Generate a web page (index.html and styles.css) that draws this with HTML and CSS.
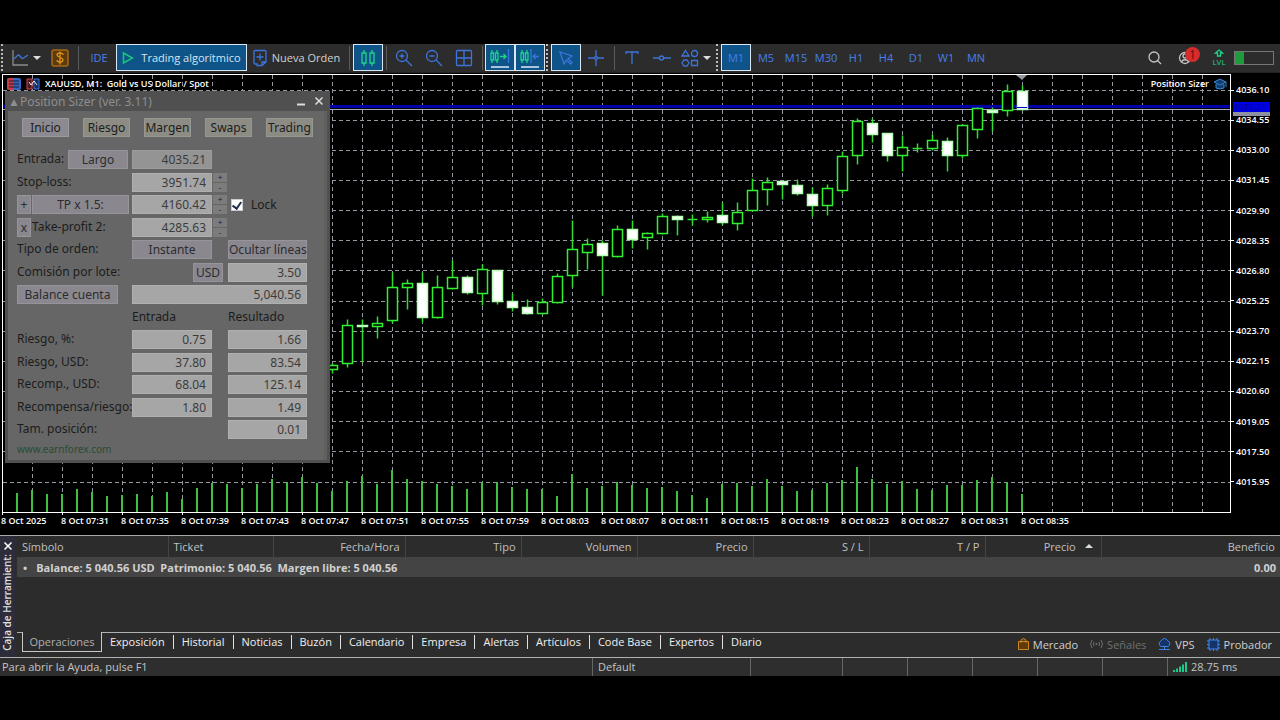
FILE: index.html
```html
<!DOCTYPE html>
<html lang="es">
<head>
    <meta charset="UTF-8">
    <meta name="viewport" content="width=device-width, initial-scale=1.0">
    <title>XAUUSD, M1: Gold vs US Dollar / Spot</title>
    <link rel="stylesheet" href="styles.css">
</head>
<body>
    <div class="app">
        <!-- toolbar start -->
        <header class="toolbar">
            <span class="grip"></span>
            <button class="tool tool-menu" aria-label="Tipo de gráfico">
                <svg width="18" height="18" viewBox="0 0 18 18"><path class="s-grey" d="M2 1v15h15"/><path class="s-blue" d="M3 10l3.500-3.500q1-1 2 0l2 2.500q1 1 2 0L17 6"/></svg>
                <span class="caret"></span>
            </button>
            <button class="tool tool-dollar" aria-label="Símbolos">
                <svg width="18" height="18" viewBox="0 0 18 18"><rect x="1" y="1" width="16" height="16" rx="2" fill="#5c3a0c" stroke="#a86a14" stroke-width="1.500"/><path d="M12 6c0-3-6-2.500-6 0s6 2 6 5-6 2.500-6 0M9 2.500v13" fill="none" stroke="#e0941c" stroke-width="1.300"/></svg>
            </button>
            <span class="sep"></span>
            <button class="tool tool-ide">IDE</button>
            <button class="tool tool-algo active">
                <svg width="12" height="14" viewBox="0 0 12 14"><path d="M1.500 2l9 5-9 5z" fill="none" stroke="#16c878" stroke-width="1.500"/></svg>
                Trading algorítmico
            </button>
            <button class="tool tool-order">
                <svg width="14" height="18" viewBox="0 0 14 18"><path class="s-blue" d="M2 1.500h10a1 1 0 0 1 1 1V13l-4 3.500H4V15H2a1 1 0 0 1-1-1V2.500a1 1 0 0 1 1-1zM7 4.500v7M3.500 8h7M9 16v-3h4"/></svg>
                Nueva Orden
            </button>
            <span class="sep"></span>
            <button class="tool icon active" aria-label="Velas">
                <svg width="20" height="20" viewBox="0 0 20 20"><path class="s-green" d="M4 5h4v10H4zM12 5h4v10h-4zM6 2v3M6 15v3M14 2v3M14 15v3"/></svg>
            </button>
            <span class="sep sep-tight"></span>
            <button class="tool icon" aria-label="Acercar">
                <svg width="18" height="18" viewBox="0 0 18 18"><circle class="s-blue" cx="7" cy="7" r="5.500"/><path class="s-blue" d="M11 11l6 6M4.500 7h5M7 4.500v5"/></svg>
            </button>
            <button class="tool icon" aria-label="Alejar">
                <svg width="18" height="18" viewBox="0 0 18 18"><circle class="s-blue" cx="7" cy="7" r="5.500"/><path class="s-blue" d="M11 11l6 6M4.500 7h5"/></svg>
            </button>
            <button class="tool icon" aria-label="Mosaico">
                <svg width="18" height="18" viewBox="0 0 18 18"><path class="s-blue" d="M2.500 1.500h13a1 1 0 0 1 1 1v13a1 1 0 0 1-1 1h-13a1 1 0 0 1-1-1v-13a1 1 0 0 1 1-1zM9 1.500v15M1.500 9h15"/></svg>
            </button>
            <span class="sep sep-tight"></span>
            <button class="tool icon active" aria-label="Desplazamiento automático">
                <svg width="20" height="22" viewBox="0 0 20 22"><path class="s-green" d="M1 6h2.500v7H1zM5.500 6H8v7H5.500zM2 3v3M2 13v3M7 3v3M7 13v3M10 9.500h6M13.500 7l2.500 2.500-2.500 2.500"/><path d="M18.500 2v14" class="s-blue"/><path d="M1 20h18" stroke="#a9c4dc" stroke-width="2"/></svg>
            </button>
            <button class="tool icon active" aria-label="Margen del gráfico">
                <svg width="20" height="22" viewBox="0 0 20 22"><path class="s-green" d="M1 6h2.500v7H1zM5.500 6H8v7H5.500zM2 3v3M2 13v3M7 3v3M7 13v3"/><path d="M11 2v14M13 9.500h6M15.500 7L13 9.500l2.500 2.500" class="s-blue"/><path d="M1 20h18" stroke="#a9c4dc" stroke-width="2"/></svg>
            </button>
            <span class="grip"></span>
            <button class="tool icon active" aria-label="Cursor">
                <svg width="18" height="18" viewBox="0 0 18 18"><path class="s-blue" d="M3 3l12 4-4 2.500 4 4-1.500 1.500-4-4L7 15z"/></svg>
            </button>
            <button class="tool icon" aria-label="Retículo">
                <svg width="18" height="18" viewBox="0 0 18 18"><path class="s-blue" d="M9 1v6M9 11v6M1 9h6M11 9h6"/><circle class="s-blue" cx="9" cy="9" r="1.500"/></svg>
            </button>
            <span class="sep sep-tight"></span>
            <button class="tool icon" aria-label="Texto">
                <svg width="18" height="18" viewBox="0 0 18 18"><path class="s-blue" d="M3 5V3h12v2M9 3v12"/></svg>
            </button>
            <button class="tool icon" aria-label="Línea horizontal">
                <svg width="20" height="18" viewBox="0 0 20 18"><path class="s-blue" d="M1 9h6M12 9h7"/><circle class="s-blue" cx="9.500" cy="9" r="2"/></svg>
            </button>
            <button class="tool tool-shapes" aria-label="Objetos">
                <svg width="18" height="18" viewBox="0 0 18 18"><path class="s-blue" d="M4.500 1.500L8 7H1zM10.500 11.500h6v5h-6z"/><circle class="s-blue" cx="13.500" cy="4.500" r="3"/><path class="s-blue" d="M3 11h3l2 3-2 3H3l-2-3z"/></svg>
                <span class="caret"></span>
            </button>
            <span class="grip"></span>
            <nav class="periods">
                <button class="tool icon active">M1</button>
                <button class="tool icon">M5</button>
                <button class="tool icon">M15</button>
                <button class="tool icon">M30</button>
                <button class="tool icon">H1</button>
                <button class="tool icon">H4</button>
                <button class="tool icon">D1</button>
                <button class="tool icon">W1</button>
                <button class="tool icon">MN</button>
            </nav>
            <div class="toolbar-right">
                <button class="tool icon" aria-label="Buscar">
                    <svg width="16" height="16" viewBox="0 0 16 16"><circle class="s-light" cx="7" cy="7" r="5"/><path class="s-light" d="M10.500 10.500L14 14"/></svg>
                </button>
                <button class="tool icon account" aria-label="Cuenta">
                    <svg width="16" height="16" viewBox="0 0 16 16"><circle class="s-light" cx="8" cy="8" r="5.500"/><circle class="s-light" cx="8" cy="6" r="2"/><path class="s-light" d="M4.500 12c1-3 6-3 7 0"/></svg>
                    <span class="badge">1</span>
                </button>
                <span class="level">
                    <svg width="10" height="9" viewBox="0 0 10 9"><path class="s-green" d="M5 1l3.500 3H6.500v3h-3V4h-2z"/></svg>
                    LVL
                </span>
                <span class="battery"><span class="battery-fill"></span></span>
            </div>
        </header>
        <!-- toolbar end -->

        <!-- chart start -->
        <main class="chart">
            <div class="chart-row">
                <div class="plot">
                    <svg class="plot-svg" id="plot"></svg>
                </div>
                <div class="price-axis" id="prices"></div>
            </div>
            <div class="time-axis" id="times"></div>

            <div class="chart-title">
                <svg width="14" height="12" viewBox="0 0 14 12"><rect width="14" height="12" rx="2" fill="#3468c4"/><path d="M0 2a2 2 0 0 1 2-2h5v12H2a2 2 0 0 1-2-2z" fill="#c83c48"/><path d="M2 3h10M2 6h10M2 9h10" stroke="#141c34"/></svg>
                <svg width="14" height="12" viewBox="0 0 14 12"><path d="M1 1h5v10H1z" fill="#4c1820" stroke="#d84450"/><path d="M8 1h5v10H8z" fill="#142c5c" stroke="#3c78dc"/><path d="M3 4l2 3 3-4 3 4" fill="none" stroke="#f0e4e8"/></svg>
                XAUUSD, M1:&nbsp; Gold vs US Dollar / Spot
            </div>
            <div class="expert">
                Position Sizer
                <svg width="14" height="12" viewBox="0 0 14 12"><path d="M7 1l6 3-6 3-6-3zM3 6v4q4 2 8 0V6M13 4v5" fill="#123c6c" stroke="#3488d8"/></svg>
            </div>
            <div class="last-price">4035.21</div>

            <!-- position sizer start -->
            <section class="sizer">
                <div class="sizer-title">
                    <span class="sizer-name">▲Position Sizer (ver. 3.11)</span>
                    <button class="sizer-ctl" aria-label="Minimizar"><svg width="10" height="10" viewBox="0 0 10 10"><path d="M1 8.500h8" stroke="#ddd" stroke-width="2"/></svg></button>
                    <button class="sizer-ctl" aria-label="Cerrar"><svg width="10" height="10" viewBox="0 0 10 10"><path d="M1.500 1.500l7 7M8.500 1.500l-7 7" stroke="#ddd" stroke-width="1.500"/></svg></button>
                </div>
                <div class="sizer-body">
                    <div class="sizer-tabs">
                        <button class="current">Inicio</button>
                        <button>Riesgo</button>
                        <button>Margen</button>
                        <button>Swaps</button>
                        <button>Trading</button>
                    </div>
                    <div class="sizer-rows">
                        <div class="line">
                            <div class="name name-split"><label for="entry">Entrada:</label><button class="btn w-side">Largo</button></div>
                            <input class="off" id="entry" value="4035.21">
                        </div>
                        <div class="line">
                            <div class="name"><label for="sl">Stop-loss:</label></div>
                            <input id="sl" value="3951.74">
                            <div class="spin"><button>+</button><button>-</button></div>
                        </div>
                        <div class="line">
                            <div class="name"><button class="btn w-mini">+</button><button class="btn w-tp">TP x 1.5:</button></div>
                            <input aria-label="Take-profit 1" value="4160.42">
                            <div class="spin"><button>+</button><button>-</button></div>
                            <div class="lock"><input type="checkbox" id="lock" checked><label for="lock">Lock</label></div>
                        </div>
                        <div class="line">
                            <div class="name"><button class="btn w-mini">x</button><label for="tp2">Take-profit 2:</label></div>
                            <input id="tp2" value="4285.63">
                            <div class="spin"><button>+</button><button>-</button></div>
                        </div>
                        <div class="line">
                            <div class="name">Tipo de orden:</div>
                            <button class="btn">Instante</button>
                            <button class="btn col-result">Ocultar líneas</button>
                        </div>
                        <div class="line">
                            <div class="name"><label for="fee">Comisión por lote:</label></div>
                            <button class="btn w-usd">USD</button>
                            <input class="col-result" id="fee" value="3.50">
                        </div>
                        <div class="line">
                            <div class="name"><button class="btn w-balance">Balance cuenta</button></div>
                            <input class="wide" aria-label="Balance cuenta" value="5,040.56">
                        </div>
                        <div class="line">
                            <div class="name"></div>
                            <div>Entrada</div>
                            <div class="col-result">Resultado</div>
                        </div>
                        <div class="line">
                            <div class="name"><label for="risk">Riesgo, %:</label></div>
                            <input id="risk" value="0.75">
                            <input class="col-result" aria-label="Riesgo, % resultado" value="1.66">
                        </div>
                        <div class="line">
                            <div class="name"><label for="risk-usd">Riesgo, USD:</label></div>
                            <input id="risk-usd" value="37.80">
                            <input class="col-result" aria-label="Riesgo, USD resultado" value="83.54">
                        </div>
                        <div class="line">
                            <div class="name"><label for="reward">Recomp., USD:</label></div>
                            <input id="reward" value="68.04">
                            <input class="col-result" aria-label="Recomp., USD resultado" value="125.14">
                        </div>
                        <div class="line">
                            <div class="name"><label for="ratio">Recompensa/riesgo:</label></div>
                            <input id="ratio" value="1.80">
                            <input class="col-result" aria-label="Recompensa/riesgo resultado" value="1.49">
                        </div>
                        <div class="line">
                            <div class="name"><label for="size">Tam. posición:</label></div>
                            <input class="col-result" id="size" value="0.01">
                        </div>
                    </div>
                    <a class="sizer-link" href="#">www.earnforex.com</a>
                </div>
            </section>
            <!-- position sizer end -->
        </main>
        <!-- chart end -->

        <!-- toolbox start -->
        <section class="toolbox">
            <aside class="toolbox-side">
                <button aria-label="Cerrar"><svg width="10" height="10" viewBox="0 0 10 10"><path d="M1.500 1.500l7 7M8.500 1.500l-7 7" stroke="#fff" stroke-width="1.500"/></svg></button>
                <span>Caja de Herramient:</span>
            </aside>
            <div class="toolbox-main">
                <table>
                    <colgroup>
                        <col class="c-symbol"><col class="c-ticket"><col class="c-date"><col class="c-num"><col class="c-num"><col class="c-num"><col class="c-num"><col class="c-num"><col class="c-num"><col>
                    </colgroup>
                    <thead>
                        <tr>
                            <th class="left">Símbolo</th>
                            <th class="left">Ticket</th>
                            <th>Fecha/Hora</th>
                            <th>Tipo</th>
                            <th>Volumen</th>
                            <th>Precio</th>
                            <th>S / L</th>
                            <th>T / P</th>
                            <th>Precio <span class="sort"></span></th>
                            <th>Beneficio</th>
                        </tr>
                    </thead>
                    <tbody>
                        <tr>
                            <td class="left" colspan="9"><span class="dot">•</span>Balance: 5 040.56 USD&nbsp; Patrimonio: 5 040.56&nbsp; Margen libre: 5 040.56</td>
                            <td>0.00</td>
                        </tr>
                    </tbody>
                </table>
                <div class="tabs">
                    <div class="tabs-edge"></div>
                    <button class="current">Operaciones</button>
                    <div class="tabs-rest">
                        <button>Exposición</button>
                        <button>Historial</button>
                        <button>Noticias</button>
                        <button>Buzón</button>
                        <button>Calendario</button>
                        <button>Empresa</button>
                        <button>Alertas</button>
                        <button>Artículos</button>
                        <button>Code Base</button>
                        <button>Expertos</button>
                        <button>Diario</button>
                        <div class="services">
                            <a href="#"><svg width="13" height="14" viewBox="0 0 13 14"><path d="M1.500 4.500h10v8h-10zM4 6V3q2.500-3 5 0v3" fill="#5c3a0c" stroke="#d0841c"/></svg>Mercado</a>
                            <a class="muted" href="#"><svg width="15" height="12" viewBox="0 0 15 12"><path d="M3 2q-3 4 0 8M5 4q-1 2 0 4M12 2q3 4 0 8M10 4q1 2 0 4" fill="none" stroke="#707070"/><circle cx="7.500" cy="6" r="1" fill="#707070"/></svg>Señales</a>
                            <a href="#"><svg width="15" height="14" viewBox="0 0 15 14"><path d="M4 9.500a3 3 0 0 1 0-5.500q3.500-5 7 0a3 3 0 0 1 0 5.500zM7.500 10v2.500M2 12.500h11" fill="#143468" stroke="#3c84f4"/></svg>VPS</a>
                            <a href="#"><svg width="15" height="15" viewBox="0 0 15 15"><path d="M4 1v13M7.500 1v13M11 1v13M1 4h13M1 7.500h13M1 11h13" stroke="#3c84f4"/><rect x="3" y="3" width="9" height="9" fill="#143468" stroke="#3c84f4"/></svg>Probador</a>
                        </div>
                    </div>
                </div>
            </div>
        </section>
        <!-- toolbox end -->

        <footer class="status">
            <span class="status-help">Para abrir la Ayuda, pulse F1</span>
            <span class="s-profile">Default</span>
            <span class="s-wide"></span>
            <span></span>
            <span></span>
            <span></span>
            <span></span>
            <span></span>
            <span class="s-ping"><svg width="15" height="10" viewBox="0 0 15 10"><path d="M1 10V8M4 10V6.500M7 10V4.500M10 10V2.500M13 10V0" stroke="#1ec88a" stroke-width="2"/></svg>28.75 ms</span>
        </footer>
    </div>
    <script src="chart.js"></script>
</body>
</html>
```
FILE: styles.css
```css
* {
    box-sizing: border-box;
}

body {
    margin: 0;
    background-color: #000;
    font-family: "Open Sans", "Noto Sans", sans-serif;
    font-size: 11px;
    color: #d0d0d0;
}

button, input {
    font: inherit;
    color: inherit;
    margin: 0;
    padding: 0;
    border: 0;
    background: none;
    border-radius: 0;
}

a {
    color: inherit;
    text-decoration: none;
}

svg {
    display: block;
    flex: none;
}

.app {
    display: flex;
    flex-direction: column;
    padding: 44px 0;
}

/* icon strokes */

.s-blue, .s-green, .s-grey, .s-light {
    fill: none;
    stroke-width: 1.3;
}

.s-blue {
    stroke: #3c74dc;
}

.s-green {
    stroke: #1ed488;
}

.s-grey {
    stroke: #8a8a8a;
}

.s-light {
    stroke: #c4c4c4;
}

/* toolbar */

.toolbar {
    display: flex;
    align-items: flex-start;
    height: 28px;
    background-color: #2c2c2c;
}

.tool {
    display: flex;
    align-items: center;
    justify-content: center;
    flex: none;
    height: 27px;
    white-space: nowrap;
    color: #4480ec;
}

.tool.active {
    background-color: #0f5489;
    border: 1px solid #dce6f0;
}

.icon {
    width: 30px;
}

.grip {
    flex: none;
    width: 3px;
    height: 27px;
    margin: 0 2px 0 1px;
    border-left: 2px dotted #bbb;
}

.sep {
    flex: none;
    width: 1px;
    height: 24px;
    margin: 2px 3px 0;
    background-color: #5c5c5c;
}

.sep-tight {
    margin: 2px 2px 0 3px;
}

.caret {
    border: 4px solid transparent;
    border-top-color: #ddd;
    border-bottom: 0;
    margin-left: 4px;
}

.tool-menu {
    width: 38px;
    margin-left: 1px;
}

.tool-dollar {
    width: 30px;
}

.tool-ide {
    width: 34px;
}

.tool-algo {
    width: 131px;
    gap: 7px;
    color: #d4e4f0;
}

.tool-order {
    width: 99px;
    gap: 5px;
    color: #d0d0d0;
}

.tool-shapes {
    width: 38px;
}

.periods {
    display: flex;
}

.toolbar-right {
    display: flex;
    align-items: center;
    margin-left: auto;
    padding-right: 6px;
}

.account {
    position: relative;
}

.badge {
    position: absolute;
    top: 3px;
    right: 0;
    width: 15px;
    height: 15px;
    border-radius: 50%;
    background-color: #d82c2c;
    color: #541010;
    line-height: 15px;
    font-size: 12px;
}

.level {
    display: flex;
    flex-direction: column;
    align-items: center;
    width: 20px;
    margin: 0 5px 0 9px;
    font-size: 8px;
    line-height: 8px;
    color: #1ed488;
}

.battery {
    width: 40px;
    height: 14px;
    border: 1px solid #777;
}

.battery-fill {
    display: block;
    width: 9px;
    height: 12px;
    background-color: #1e9c3c;
}

/* chart */

.chart {
    position: relative;
    padding-top: 1px;
    background-color: #000;
    border-top: 1px solid #222;
    font-size: 9px;
    font-weight: 600;
    color: #fff;
}

.chart-row {
    display: flex;
}

.plot {
    flex: 1;
    min-width: 0;
    margin-left: 2px;
    border: 1px solid #fff;
}

.plot-svg {
    width: 100%;
    height: 437px;
}

.grid-line {
    stroke: #9498a0;
    stroke-dasharray: 4 3;
}

.candle {
    fill: #000;
    stroke: #30f030;
    stroke-width: 1.5;
}

.candle.down {
    fill: #fff;
    stroke: #b4ffb4;
}

.wick {
    stroke: #30dc30;
    stroke-width: 1.5;
}

.volume {
    stroke: #40c040;
    stroke-width: 2;
}

.price-axis {
    display: flex;
    flex-direction: column;
    justify-content: space-between;
    width: 49px;
    height: 404px;
    margin-top: 10px;
    line-height: 12px;
}

.price-axis span {
    display: flex;
    align-items: center;
    gap: 2px;
}

.price-axis span::before {
    content: "";
    width: 3px;
    height: 1px;
    background-color: #fff;
}

.time-axis {
    display: flex;
    overflow: hidden;
    height: 22px;
    padding-left: 1px;
    line-height: 12px;
}

.time-axis span {
    flex: none;
    width: 60px;
}

.time-axis span::before {
    content: "";
    display: block;
    width: 1px;
    height: 2px;
    margin-left: 1px;
    background-color: #fff;
}

.chart-title {
    position: absolute;
    top: 4px;
    left: 7px;
    display: flex;
    align-items: center;
    gap: 5px;
    line-height: 14px;
}

.expert {
    position: absolute;
    top: 4px;
    right: 53px;
    display: flex;
    align-items: center;
    gap: 4px;
    line-height: 14px;
}

.last-price {
    position: absolute;
    top: 29px;
    right: 10px;
    width: 37px;
    height: 14px;
    border-bottom: 4px solid #8c90a0;
    background-color: #0000e8;
    color: #0000a0;
    line-height: 10px;
}

/* position sizer */

.sizer {
    position: absolute;
    top: 18px;
    left: 5px;
    width: 325px;
    padding: 0 3px 3px;
    background-color: #505050;
    font-family: "Noto Sans", "Open Sans", sans-serif;
    font-size: 12px;
    font-weight: 400;
    color: #1c1c1c;
}

.sizer-title {
    display: flex;
    align-items: center;
    height: 20px;
    color: #8e8e8e;
}

.sizer-name {
    flex: 1;
}

.sizer-ctl {
    width: 18px;
    padding-left: 5px;
}

.sizer-body {
    padding: 7px 15px 3px 9px;
    background-color: #666;
    border-right: 3px solid #606060;
}

.sizer-tabs {
    display: flex;
    justify-content: space-between;
    padding-left: 5px;
    margin: 0 -4px 13px 0;
}

.sizer-tabs button {
    width: 47px;
    height: 19px;
    background-color: #8c8c84;
    border: 1px solid #989890;
}

.sizer-tabs .current {
    background-color: #8c8a90;
    border-color: #9c9aa0;
}

.sizer-rows {
    display: flex;
    flex-direction: column;
    justify-content: space-between;
    height: 289px;
}

.line {
    display: grid;
    grid-template-columns: 114px 80px 14px 79px;
    column-gap: 1px;
    height: 19px;
    line-height: 17px;
}

.line > * {
    min-width: 0;
}

.name {
    display: flex;
    gap: 1px;
    white-space: nowrap;
}

.name-split {
    justify-content: space-between;
    padding-right: 3px;
}

.line > .col-result {
    grid-column: 4;
}

.line > .wide {
    grid-column: 2 / 5;
}

.line input {
    width: 100%;
    height: 19px;
    padding-right: 5px;
    background-color: #a6a6a6;
    border: 1px solid #b0b0b0;
    text-align: right;
    color: #3c3c3c;
}

.line .off {
    background-color: #949494;
    border-color: #9c9c9c;
}

.btn {
    height: 19px;
    background-color: #8a888e;
    border: 1px solid #96949a;
    color: #2c2c30;
    white-space: nowrap;
}

.w-side {
    width: 60px;
}

.w-mini {
    width: 14px;
}

.w-tp {
    width: 97px;
}

.w-usd {
    width: 30px;
    justify-self: end;
    grid-column: 2 / 4;
    margin-right: 4px;
}

.w-balance {
    width: 101px;
}

.spin {
    display: flex;
    flex-direction: column;
    gap: 1px;
}

.spin button {
    height: 9px;
    background-color: #7c7c7c;
    font-family: "Liberation Sans", sans-serif;
    line-height: 9px;
    font-size: 8px;
}

.line .lock {
    display: flex;
    align-items: center;
    gap: 8px;
    padding-left: 3px;
}

.line .lock input {
    appearance: none;
    width: 12px;
    height: 12px;
    padding: 0;
    background: #fff;
    border: 1px solid #ccc;
}

.lock input:checked::before {
    content: "";
    display: block;
    width: 4px;
    height: 7px;
    margin: 0 auto;
    border: solid #20304c;
    border-width: 0 2px 2px 0;
    transform: rotate(35deg);
}

.sizer-link {
    display: block;
    margin-top: 3px;
    line-height: 15px;
    font-size: 10px;
    color: #284c34;
}

/* toolbox */

.toolbox {
    display: flex;
    height: 122px;
    border-top: 1px solid #a8a8a8;
    background-color: #2c2c2c;
}

.toolbox-side {
    display: flex;
    flex-direction: column;
    align-items: center;
    justify-content: space-between;
    width: 15px;
    padding: 5px 0 6px;
    background-color: #2c2c3a;
    color: #e0e0e0;
}

.toolbox-side span {
    writing-mode: vertical-rl;
    transform: rotate(180deg);
    line-height: 15px;
    font-size: 10px;
    font-weight: 600;
    white-space: nowrap;
}

.toolbox-main {
    flex: 1;
    display: flex;
    flex-direction: column;
    min-width: 0;
    padding-left: 2px;
}

table {
    width: 100%;
    table-layout: fixed;
    border-collapse: collapse;
}

th {
    height: 21px;
    padding: 0 5px;
    border-right: 1px solid #444;
    text-align: right;
    font-weight: 400;
    color: #c0c0c0;
}

th:last-child {
    border-right: 0;
}

td {
    height: 20px;
    padding: 0 4px 0 6px;
    background-color: #444;
    text-align: right;
    font-weight: 700;
}

.left {
    text-align: left;
}

.dot {
    margin-right: 9px;
}

.c-symbol {
    width: 151px;
}

.c-ticket {
    width: 105px;
}

.c-date {
    width: 132px;
}

.c-num {
    width: 116px;
}

.sort {
    display: inline-block;
    margin: 0 3px 3px 6px;
    border: 4px solid transparent;
    border-bottom-color: #ddd;
    border-top: 0;
}

.tabs {
    display: flex;
    margin-top: auto;
    height: 25px;
}

.tabs-edge {
    width: 5px;
    border-top: 1px solid #b0b0b0;
}

.tabs > .current {
    width: 80px;
    height: 20px;
    border: 1px solid #c8c8c8;
    border-top: 0;
    color: #b0b0b0;
}

.tabs-rest {
    display: flex;
    flex: 1;
    border-top: 1px solid #b0b0b0;
}

.tabs-rest button {
    height: 14px;
    margin-top: 2px;
    padding: 0 8px;
    border-right: 1px solid #e0e0e0;
    line-height: 14px;
    font-weight: 500;
    color: #f0f0f0;
}

.tabs-rest button:last-of-type {
    border-right: 0;
}

.services {
    display: flex;
    align-items: center;
    gap: 11px;
    margin-left: auto;
    padding: 0 8px 2px 0;
}

.services a {
    display: flex;
    align-items: center;
    gap: 3px;
}

.services .muted {
    color: #707070;
}

/* status bar */

.status {
    display: flex;
    height: 19px;
    border-top: 1px solid #b0b0b0;
    background-color: #2e2e2e;
    line-height: 18px;
    color: #c4c4c4;
}

.status span {
    width: 65px;
    padding-left: 5px;
    border-left: 1px solid #666;
}

.status .status-help {
    flex: 1;
    padding-left: 2px;
    border-left: 0;
}

.status .s-profile {
    width: 158px;
}

.status .s-wide {
    width: 92px;
}

.status .s-ping {
    display: flex;
    align-items: center;
    gap: 3px;
    width: 113px;
}
```
FILE: chart.js
```js
const svgNs = 'http://www.w3.org/2000/svg';
const plot = document.getElementById('plot');

// rows are counted from the top of the window, the plot starts here
const top0 = 75;
const left0 = 3;
const bottom = 512;
const step = 15;

// high, body top, body bottom, low, down
const candles = [
    [363, 365, 370, 373, 0], [319, 325, 364, 367, 0], [319, 325, 327, 362, 1], [316, 323, 327, 338, 0],
    [272, 287, 321, 323, 0], [279, 283, 288, 309, 0], [272, 283, 318, 322, 1], [275, 287, 318, 318, 0],
    [260, 277, 289, 289, 0], [275, 277, 293, 294, 1], [264, 269, 294, 305, 0], [270, 270, 302, 304, 1],
    [293, 301, 308, 311, 1], [299, 307, 314, 314, 1], [298, 302, 314, 314, 0], [273, 276, 303, 303, 0],
    [220, 249, 276, 287, 0], [238, 244, 253, 269, 0], [240, 243, 256, 295, 1], [225, 229, 257, 257, 0],
    [220, 229, 240, 248, 1], [232, 233, 238, 249, 0], [213, 216, 234, 234, 0], [215, 216, 220, 235, 1],
    [214, 219, 219, 225, 0], [211, 217, 220, 222, 0], [202, 215, 223, 225, 1], [202, 212, 224, 230, 0],
    [178, 190, 211, 211, 0], [177, 182, 190, 205, 0], [181, 181, 185, 199, 1], [179, 185, 194, 195, 1],
    [187, 194, 206, 216, 1], [184, 188, 206, 215, 0], [151, 156, 191, 193, 0], [118, 121, 156, 164, 0],
    [118, 123, 135, 142, 1], [133, 133, 156, 161, 1], [135, 147, 156, 171, 0], [143, 148, 148, 152, 0],
    [134, 140, 149, 150, 0], [137, 141, 156, 171, 1], [124, 125, 156, 158, 0], [107, 108, 130, 138, 0],
    [107, 110, 113, 131, 1], [84, 91, 111, 116, 0], [85, 91, 110, 110, 1]
];

const volumes = [
    493, 490, 494, 494, 489, 492, 496, 495, 494, 496, 492, 499, 488, 483, 484, 488, 484,
    479, 482, 477, 483, 491, 481, 476, 484, 470, 479, 481, 484, 486, 489, 482, 482, 487,
    489, 489, 496, 474, 488, 486, 482, 485, 488, 487, 491, 495, 498, 484, 483, 486, 479,
    486, 491, 490, 483, 480, 467, 479, 484, 481, 489, 490, 485, 485, 480, 477, 482, 494
];

const prices = ['4036.10', '4034.55', '4033.00', '4031.45', '4029.90', '4028.35', '4026.80',
    '4025.25', '4023.70', '4022.15', '4020.60', '4019.05', '4017.50', '4015.95'];

const times = ['2025', '07:31', '07:35', '07:39', '07:43', '07:47', '07:51', '07:55', '07:59',
    '08:03', '08:07', '08:11', '08:15', '08:19', '08:23', '08:27', '08:31', '08:35'];

function add(name, attrs) {
    const el = document.createElementNS(svgNs, name);
    for (const key in attrs) el.setAttribute(key, attrs[key]);
    plot.appendChild(el);
}

function px(x) {
    return x - left0 + 0.5;
}

function py(y) {
    return y - top0 + 0.5;
}

function draw() {
    const width = plot.clientWidth;
    plot.innerHTML = '';

    for (let x = 32; x < width; x += step * 2) {
        add('line', { class: 'grid-line', x1: px(x), x2: px(x), y1: 0, y2: bottom - top0 });
    }
    prices.forEach((p, i) => {
        const y = py(Math.round(89.5 + i * 392 / 13));
        add('line', { class: 'grid-line', x1: 0, x2: width, y1: y, y2: y });
    });

    volumes.forEach((v, i) => {
        const x = 17 + i * step - left0;
        add('line', { class: 'volume', x1: x, x2: x, y1: v - top0, y2: bottom - top0 });
    });

    // bid and ask lines
    add('rect', { x: 0, y: 105 - top0, width: width, height: 3, fill: '#0000a8' });
    add('rect', { x: 0, y: 109 - top0, width: width, height: 1, fill: '#a8acb8' });

    candles.forEach((c, i) => {
        const x = px(332 + i * step);
        const [high, up, low, tail, down] = c;
        add('line', { class: 'wick', x1: x, x2: x, y1: py(high), y2: py(tail) });
        if (up === low) {
            add('line', { class: 'wick', x1: x - 5, x2: x + 5, y1: py(up), y2: py(up) });
        } else {
            add('rect', { class: down ? 'candle down' : 'candle', x: x - 5, y: py(up), width: 10, height: low - up - 1 });
        }
    });
    add('rect', { x: 1017 - left0, y: 107 - top0, width: 10, height: 1, fill: '#0000c8' });
    add('path', { d: 'M1013 0h11l-5 5z', fill: '#9498a0' });
}

prices.forEach(p => {
    document.getElementById('prices').innerHTML += `<span>${p}</span>`;
});
times.forEach(t => {
    document.getElementById('times').innerHTML += `<span>8 Oct ${t}</span>`;
});

draw();
window.addEventListener('resize', draw);
```
